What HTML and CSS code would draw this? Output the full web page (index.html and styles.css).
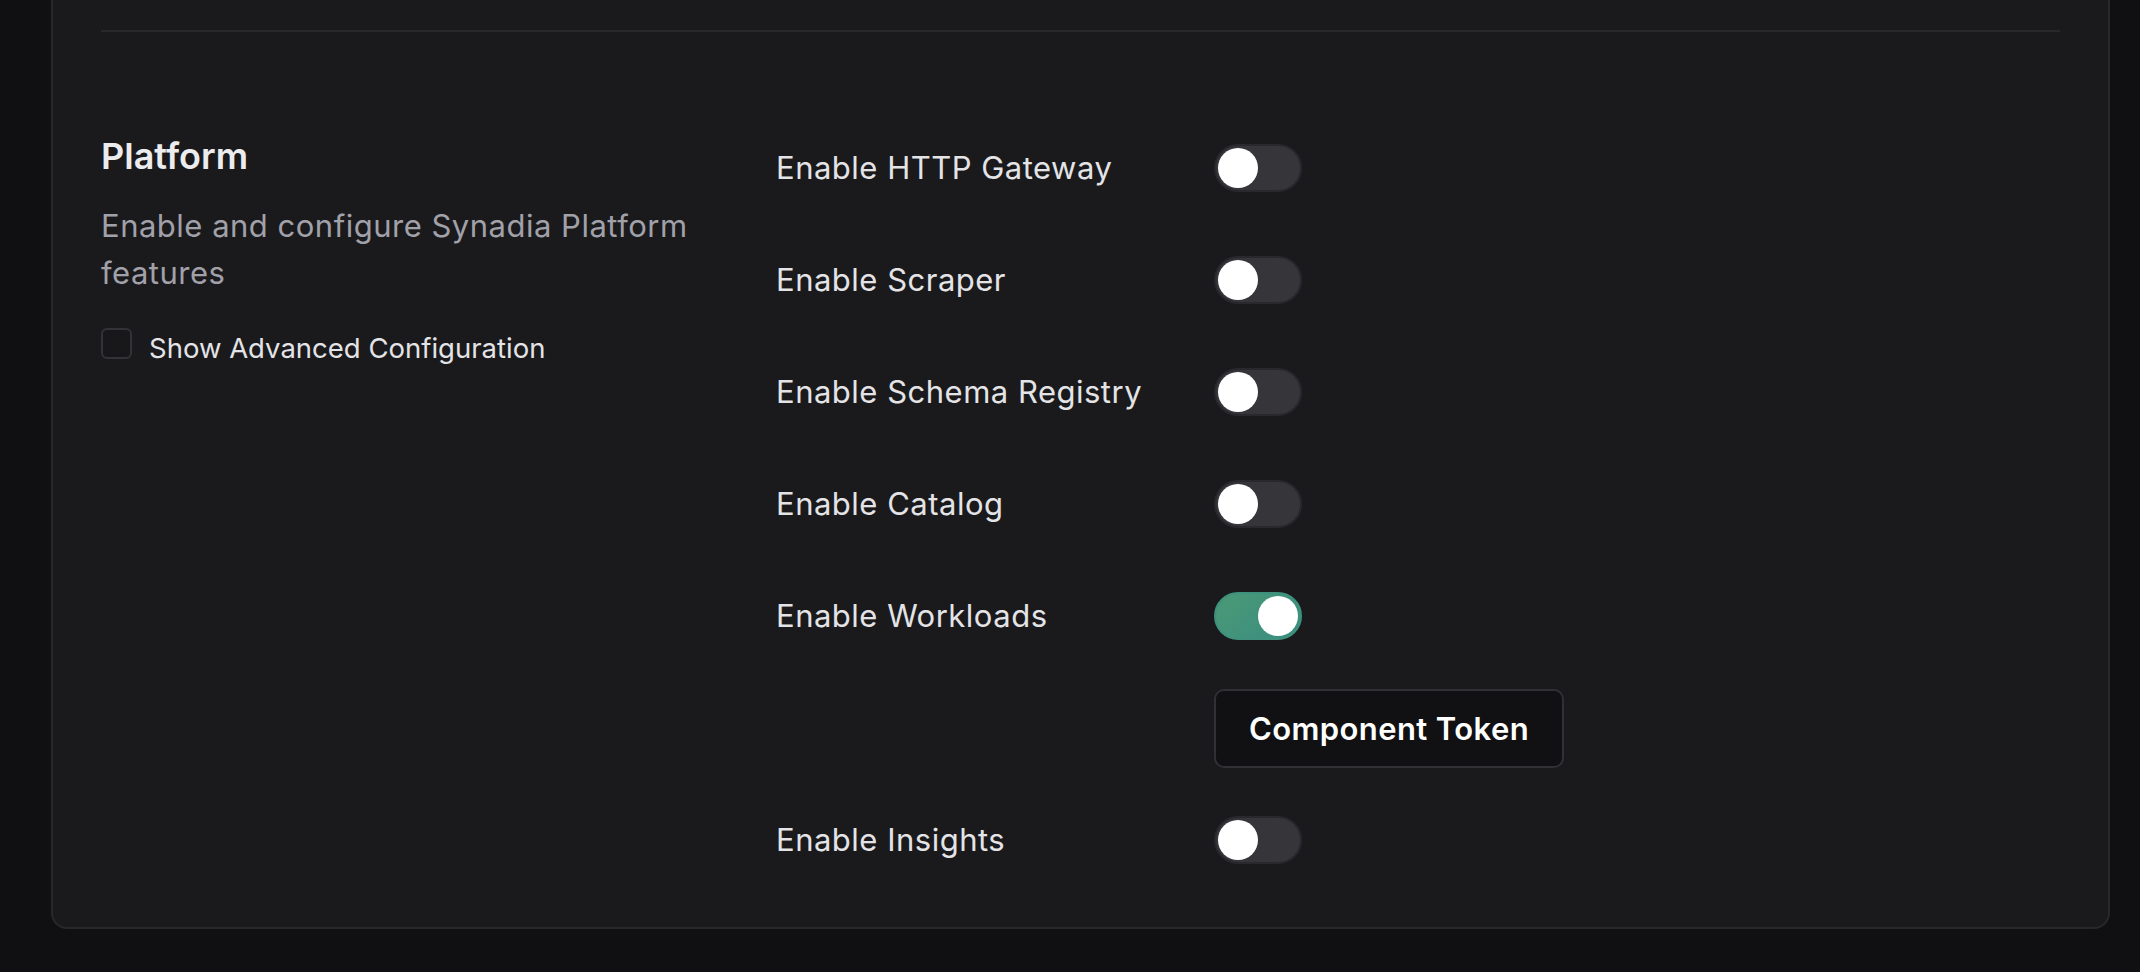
FILE: index.html
```html
<!DOCTYPE html>
<html lang="en">
<head>
<meta charset="utf-8">
<title>Platform settings</title>
<link rel="stylesheet" href="styles.css">
</head>
<body>
<main class="page">
  <section class="card">
    <hr class="divider">
    <div class="settings">
      <div class="intro">
        <h2 class="intro-title">Platform</h2>
        <p class="intro-text">Enable and configure Synadia Platform features</p>
        <label class="check">
          <span class="check-box"></span>
          <span class="check-label">Show Advanced Configuration</span>
        </label>
      </div>
      <div class="options">
        <div class="option">
          <span class="option-label">Enable HTTP Gateway</span>
          <span class="switch"><span class="knob"></span></span>
        </div>
        <div class="option">
          <span class="option-label">Enable Scraper</span>
          <span class="switch"><span class="knob"></span></span>
        </div>
        <div class="option">
          <span class="option-label">Enable Schema Registry</span>
          <span class="switch"><span class="knob"></span></span>
        </div>
        <div class="option">
          <span class="option-label">Enable Catalog</span>
          <span class="switch"><span class="knob"></span></span>
        </div>
        <div class="option">
          <span class="option-label">Enable Workloads</span>
          <span class="switch switch-on"><span class="knob"></span></span>
        </div>
        <div class="option">
          <span class="option-label"></span>
          <button class="token-btn" type="button">Component Token</button>
        </div>
        <div class="option">
          <span class="option-label">Enable Insights</span>
          <span class="switch"><span class="knob"></span></span>
        </div>
      </div>
    </div>
  </section>
</main>
</body>
</html>
```

FILE: styles.css
```css
* {
  box-sizing: border-box;
}

html,
body {
  margin: 0;
  background: #101012;
  font-family: Inter, "Noto Sans", "Liberation Sans", sans-serif;
  color: #e4e4e7;
}

.page {
  padding: 0 30px 43px 51px;
}

.card {
  background: #1a1a1c;
  border: 2px solid #28282b;
  border-top: 0;
  border-radius: 0 0 16px 16px;
  padding: 30px 48px 47px;
}

.divider {
  margin: 0;
  border: 0;
  height: 2px;
  background: #28282b;
}

.settings {
  display: grid;
  grid-template-columns: 675px 1fr;
  padding-top: 96px;
}

.intro-title {
  margin: 0;
  font-size: 36px;
  line-height: 56px;
  font-weight: 600;
  color: #ececee;
}

.intro-text {
  margin: 18px 0 0;
  font-size: 31px;
  line-height: 47px;
  letter-spacing: 0.5px;
  color: #a1a1aa;
  max-width: 620px;
}

.check {
  display: flex;
  align-items: flex-start;
  gap: 17px;
  margin-top: 32px;
}

.check-box {
  flex: none;
  width: 31px;
  height: 31px;
  border: 2px solid #323237;
  border-radius: 6px;
  background: #18181b;
}

.check-label {
  font-size: 27.5px;
  line-height: 40px;
  color: #e4e4e7;
}

.options {
  display: flex;
  flex-direction: column;
  gap: 32px;
}

.option {
  display: flex;
  align-items: center;
  height: 80px;
}

.option-label {
  flex: none;
  width: 438px;
  font-size: 31px;
  line-height: 40px;
  letter-spacing: 0.5px;
  color: #e4e4e7;
}

.switch {
  display: flex;
  align-items: center;
  width: 88px;
  height: 48px;
  padding: 2px;
  border: 2px solid #29292d;
  border-radius: 24px;
  background: #35353a;
}

.knob {
  width: 40px;
  height: 40px;
  border-radius: 50%;
  background: #ffffff;
}

.switch-on {
  justify-content: flex-end;
  border-color: #3e917c;
  background: linear-gradient(135deg, #4a9976, #3a8d81);
}

.token-btn {
  height: 79px;
  padding: 0 33px;
  border: 2px solid #303035;
  border-radius: 10px;
  background: #111113;
  color: #ffffff;
  font-family: inherit;
  font-size: 31px;
  font-weight: 600;
  letter-spacing: 0.4px;
}
```
